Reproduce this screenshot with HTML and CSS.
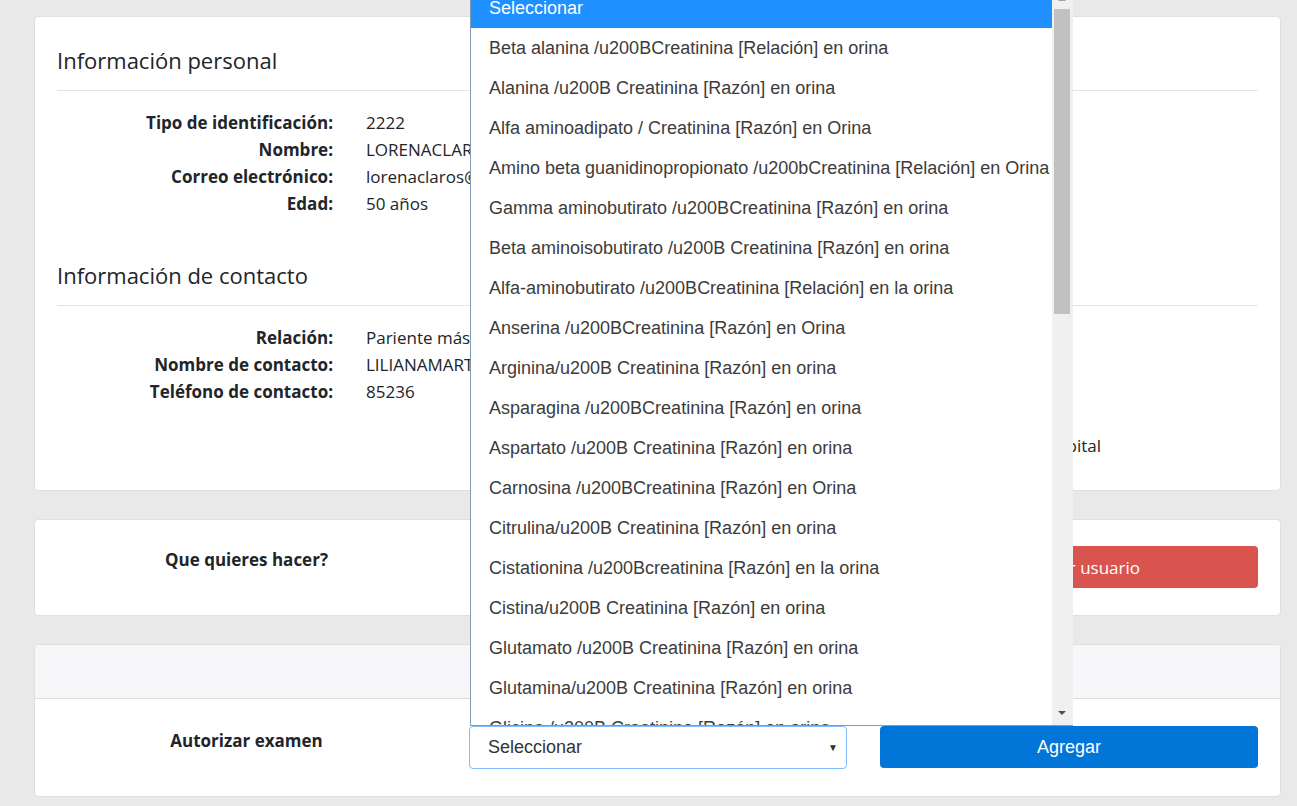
FILE: index.html
```html
<!DOCTYPE html>
<html lang="es">
<head>
<meta charset="utf-8">
<title>Paciente</title>
<link rel="stylesheet" href="styles.css">
</head>
<body>
<div class="page">
  <section class="card card-info">
    <div class="info-grid">
      <div class="info-main">
        <h2 class="section-title">Información personal</h2>
        <hr class="rule">
        <dl class="data">
          <dt>Tipo de identificación:</dt><dd>2222</dd>
          <dt>Nombre:</dt><dd>LORENACLAROS</dd>
          <dt>Correo electrónico:</dt><dd>lorenaclaros@gmail.com</dd>
          <dt>Edad:</dt><dd>50 años</dd>
        </dl>
        <h2 class="section-title second">Información de contacto</h2>
        <hr class="rule">
        <dl class="data">
          <dt>Relación:</dt><dd>Pariente más cercano</dd>
          <dt>Nombre de contacto:</dt><dd>LILIANAMARTINEZ</dd>
          <dt>Teléfono de contacto:</dt><dd>85236</dd>
        </dl>
        <div class="extra"><span>Hospital</span></div>
      </div>
    </div>
  </section>

  <section class="card card-row">
    <div class="row3">
      <div class="col-label">Que quieres hacer?</div>
      <div class="col"></div>
      <div class="col"><button class="btn btn-danger">Actualizar usuario</button></div>
    </div>
  </section>

  <section class="card card-exam">
    <div class="card-header"></div>
    <div class="row3 exam-body">
      <div class="col-label">Autorizar examen</div>
      <div class="col">
        <div class="select">Seleccionar<span class="caret">▼</span></div>
      </div>
      <div class="col"><button class="btn btn-primary">Agregar</button></div>
    </div>
  </section>
</div>

<div class="listbox">
  <ul class="options">
    <li class="selected">Seleccionar</li>
    <li>Beta alanina /u200BCreatinina [Relación] en orina</li>
    <li>Alanina /u200B Creatinina [Razón] en orina</li>
    <li>Alfa aminoadipato / Creatinina [Razón] en Orina</li>
    <li>Amino beta guanidinopropionato /u200bCreatinina [Relación] en Orina</li>
    <li>Gamma aminobutirato /u200BCreatinina [Razón] en orina</li>
    <li>Beta aminoisobutirato /u200B Creatinina [Razón] en orina</li>
    <li>Alfa-aminobutirato /u200BCreatinina [Relación] en la orina</li>
    <li>Anserina /u200BCreatinina [Razón] en Orina</li>
    <li>Arginina/u200B Creatinina [Razón] en orina</li>
    <li>Asparagina /u200BCreatinina [Razón] en orina</li>
    <li>Aspartato /u200B Creatinina [Razón] en orina</li>
    <li>Carnosina /u200BCreatinina [Razón] en Orina</li>
    <li>Citrulina/u200B Creatinina [Razón] en orina</li>
    <li>Cistationina /u200Bcreatinina [Razón] en la orina</li>
    <li>Cistina/u200B Creatinina [Razón] en orina</li>
    <li>Glutamato /u200B Creatinina [Razón] en orina</li>
    <li>Glutamina/u200B Creatinina [Razón] en orina</li>
    <li>Glicina /u200B Creatinina [Razón] en orina</li>
  </ul>
  <div class="scrollbar">
    <span class="arrow up"></span>
    <span class="thumb"></span>
    <span class="arrow down"></span>
  </div>
</div>
</body>
</html>
```

FILE: styles.css
```css
* { box-sizing: border-box; }
html, body { margin: 0; padding: 0; }
body {
  background: #e9e9e9;
  font-family: "Open Sans", "Noto Sans", sans-serif;
  font-size: 17px;
  color: #212529;
  height: 806px;
  overflow: hidden;
}
.page {
  padding: 16px 16px 0 34px;
  display: flex;
  flex-direction: column;
  gap: 28px;
}
.card {
  background: #fff;
  border: 1px solid #dfdfdf;
  border-radius: 4px;
}
.card-info { height: 475px; padding: 24px 22px 0 22px; }
.section-title {
  margin: 0;
  font-size: 22px;
  font-weight: 400;
  line-height: 38px;
}
.section-title.second { margin-top: 39px; }
.rule {
  border: 0;
  border-top: 1px solid #e5e5e5;
  margin: 11px 0 18px;
}
.data {
  display: grid;
  grid-template-columns: 276px 1fr;
  column-gap: 33px;
  margin: 0;
  line-height: 27px;
}
.data dt { font-weight: 700; text-align: right; }
.data dd { margin: 0; }
.extra { display: flex; justify-content: flex-end; padding-right: 157px; margin-top: 27px; line-height: 27px; }

.row3 {
  display: grid;
  grid-template-columns: 379px 378px 378px;
  column-gap: 33px;
  padding: 0 22px;
}
.col-label { font-weight: 700; text-align: center; line-height: 27px; }
.card-row { padding: 26px 0 27px; }
.btn {
  width: 100%;
  height: 42px;
  border: 0;
  border-radius: 4px;
  color: #fff;
  font-size: 17px;
  font-family: "Open Sans", "Noto Sans", sans-serif;
}
.btn-danger { background: #d9534f; }
.btn-primary { background: #0275d8; font-family: "Liberation Sans", Arial, sans-serif; font-size: 18px; }
.card-exam { overflow: hidden; }
.card-header { height: 54px; background: #f7f7f9; border-bottom: 1px solid #dcdcdc; }
.exam-body { padding-top: 27px; padding-bottom: 27px; }
.exam-body .col-label { padding-top: 1px; }
.select {
  height: 43px;
  border: 1px solid #80bdff;
  border-radius: 4px;
  display: flex;
  align-items: center;
  justify-content: space-between;
  padding: 0 8px 0 18px;
  font-family: "Liberation Sans", Arial, sans-serif;
  font-size: 18px;
  color: #333;
}
.caret { font-size: 10px; color: #333; }

.listbox {
  position: absolute;
  left: 470px;
  top: -12px;
  width: 603px;
  height: 738px;
  background: #fff;
  border-left: 1px solid #7f9db9;
  border-bottom: 1px solid #7f9db9;
  display: flex;
  overflow: hidden;
}
.options {
  list-style: none;
  margin: 0;
  padding: 0;
  flex: 1;
  font-family: "Liberation Sans", Arial, sans-serif;
  font-size: 18px;
  color: #3c3c3c;
}
.options li {
  height: 40px;
  line-height: 40px;
  padding-left: 18px;
  white-space: nowrap;
}
.options li.selected { background: #1e90ff; color: #fff; }
.scrollbar {
  width: 21px;
  background: #f0f0f0;
  position: relative;
}
.thumb {
  position: absolute;
  left: 2px;
  right: 3px;
  top: 21px;
  height: 305px;
  background: #c1c1c1;
}
.arrow {
  position: absolute;
  left: 6px;
  width: 0;
  height: 0;
  border-left: 4px solid transparent;
  border-right: 4px solid transparent;
}
.arrow.up { top: 9px; border-bottom: 4px solid #a3a3a3; }
.arrow.down { top: 723px; border-top: 4px solid #505050; }
```
